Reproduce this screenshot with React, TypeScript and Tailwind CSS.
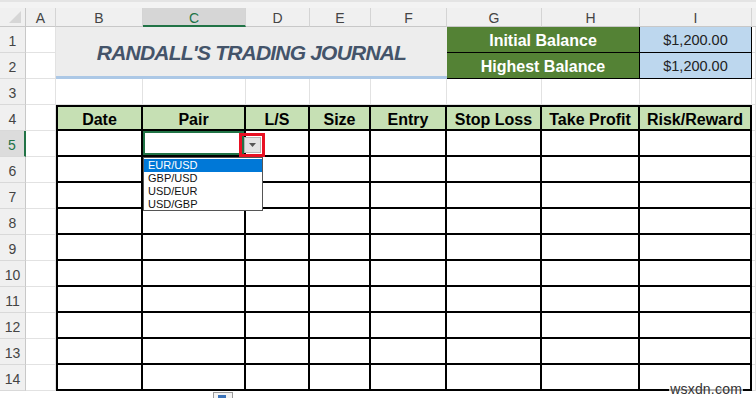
import clsx from "clsx";

const letters = ["A", "B", "C", "D", "E", "F", "G", "H", "I"];
const heads = ["Date", "Pair", "L/S", "Size", "Entry", "Stop Loss", "Take Profit", "Risk/Reward"];
const pairs = ["EUR/USD", "GBP/USD", "USD/EUR", "USD/GBP"];

const grid = "border-r border-b border-[#e2e2e2] bg-white";

function RowHead({ n }: { n: number }) {
  const active = n === 5;
  return (
    <div
      className={clsx(
        "flex items-center justify-center border-b border-[#d9d9d9] pt-[4px] text-[14px]",
        active
          ? "bg-[#dcdcdc] text-[#217346] border-r-2 border-r-[#217346]"
          : "bg-[#f0f0f0] text-[#444] border-r border-r-[#c8c8c8]"
      )}
    >
      {n}
    </div>
  );
}

function Cell({ first, top, children }: { first?: boolean; top?: boolean; children?: React.ReactNode }) {
  return (
    <div
      className={clsx(
        "flex items-center justify-center border-r-2 border-b-2 border-black",
        first && "border-l-2",
        top && "border-t-2 bg-[#c6e0b4] pt-[3px] text-[16px] font-bold text-black"
      )}
    >
      {children}
    </div>
  );
}

export default function App() {
  return (
    <div className="relative h-[398px] w-[756px] overflow-hidden bg-white font-['Liberation_Sans',Arial,sans-serif]">
      <div className="h-[8px] border-t-2 border-[#e4e4e4] bg-[#f3f3f3]" />
      <div className="grid grid-cols-[26px_30px_87px_103px_64px_61px_76px_95px_98px_112px_1fr] grid-rows-[19px_repeat(14,26px)]">
        {/* column headers */}
        <div className="relative border-r border-b border-[#c8c8c8] bg-[#f0f0f0]">
          <svg className="absolute bottom-[3px] right-[4px]" width="12" height="12" viewBox="0 0 12 12">
            <polygon points="12,0 12,12 0,12" fill="#d6d6d6" />
          </svg>
        </div>
        {letters.map((l) => (
          <div
            key={l}
            className={clsx(
              "flex items-center justify-center border-r border-[#d4d4d4] pt-[3px] text-[14px]",
              l === "C"
                ? "bg-[#d6d6d6] text-[#217346] border-b-2 border-b-[#217346]"
                : "bg-[#f0f0f0] text-[#444] border-b border-b-[#c8c8c8]"
            )}
          >
            {l}
          </div>
        ))}
        <div className="border-b border-[#c8c8c8] bg-[#f0f0f0]" />

        {/* row 1 */}
        <RowHead n={1} />
        <div className={grid} />
        <div className="col-span-5 row-span-2 flex items-center justify-center border-b-[3px] border-[#acc8e6] bg-[#ededed] pt-[3px] text-[21px] font-bold italic tracking-[-0.8px] text-[#44546a]">
          RANDALL'S TRADING JOURNAL
        </div>
        <div className="col-span-2 flex items-center justify-center border-b border-r border-black bg-[#548235] pt-[3px] text-[16px] font-bold text-white">
          Initial Balance
        </div>
        <div className="flex items-center justify-center border-b border-r border-black bg-[#bdd7ee] pt-[3px] text-[14.5px] text-[#222]">
          $1,200.00
        </div>
        <div className={grid} />

        {/* row 2 */}
        <RowHead n={2} />
        <div className={grid} />
        <div className="col-span-2 flex items-center justify-center border-b border-r border-black bg-[#548235] pt-[3px] text-[16px] font-bold text-white">
          Highest Balance
        </div>
        <div className="flex items-center justify-center border-b border-r border-black bg-[#bdd7ee] pt-[3px] text-[14.5px] text-[#222]">
          $1,200.00
        </div>
        <div className={grid} />

        {/* row 3 */}
        <RowHead n={3} />
        {Array.from({ length: 10 }).map((_, i) => (
          <div key={i} className={grid} />
        ))}

        {/* row 4 header */}
        <RowHead n={4} />
        <div className={grid} />
        {heads.map((h, i) => (
          <Cell key={h} first={i === 0} top>
            {h}
          </Cell>
        ))}
        <div className={grid} />

        {/* rows 5..14 */}
        {Array.from({ length: 10 }).map((_, r) => (
          <div key={r} className="contents">
            <RowHead n={r + 5} />
            <div className={grid} />
            {heads.map((h, i) =>
              r === 0 && i === 1 ? (
                <div key={h} className="border-r-2 border-b-2 border-black">
                  <div className="h-full w-full border-2 border-[#217346]" />
                </div>
              ) : (
                <Cell key={h} first={i === 0} />
              )
            )}
            <div className={grid} />
          </div>
        ))}
      </div>

      {/* data validation arrow */}
      <div className="absolute left-[239px] top-[133px] flex h-[24px] w-[26px] items-center justify-center border-[3px] border-[#e81123]">
        <div className="flex h-[16px] w-[17px] items-center justify-center border border-[#b5b5b5] bg-[#e3e3e3]">
          <svg width="7" height="4" viewBox="0 0 7 4">
            <polygon points="0,0 7,0 3.5,4" fill="#555" />
          </svg>
        </div>
      </div>

      {/* dropdown list */}
      <div className="absolute left-[143px] top-[157px] flex h-[54px] w-[120px] flex-col border border-[#555] bg-white py-px text-[11px] leading-[13px] text-[#111]">
        {pairs.map((p, i) => (
          <div key={p} className={clsx("h-[13px] pl-[4px]", i === 0 && "bg-[#0078d7] text-white")}>
            {p}
          </div>
        ))}
      </div>

      {/* paste options icon */}
      <div className="absolute left-[213px] top-[392px] h-[10px] w-[20px] border border-[#9a9a9a] bg-[#f4f4f4] p-[2px]">
        <div className="ml-[2px] h-[5px] w-[8px] bg-[#3b73b9]" />
      </div>

      <div className="absolute bottom-[2px] right-[13px] bg-white/70 px-px text-[14px] leading-[14px] tracking-[0.2px] text-[#333]">
        wsxdn.com
      </div>
    </div>
  );
}
